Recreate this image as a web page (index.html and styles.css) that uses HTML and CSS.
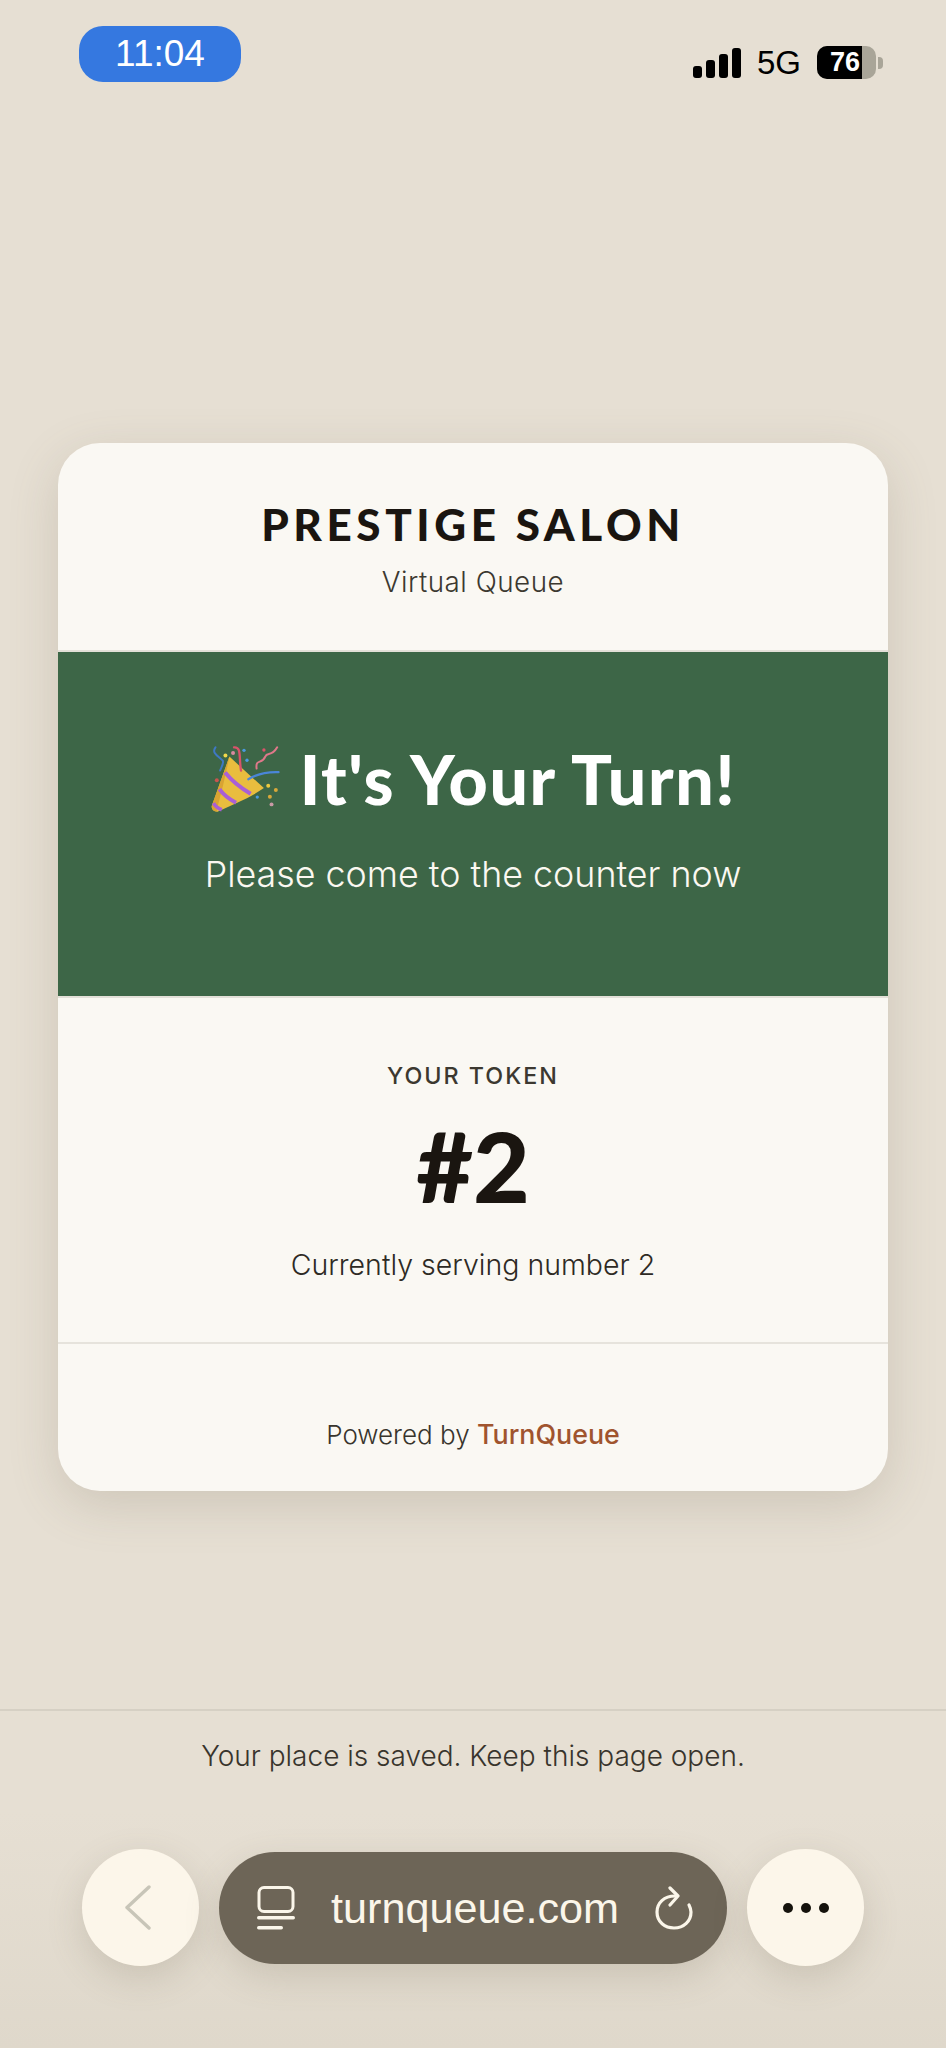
FILE: index.html
```html
<!DOCTYPE html>
<html lang="en">
<head>
<meta charset="utf-8">
<title>Prestige Salon</title>
<link rel="stylesheet" href="styles.css">
</head>
<body>
<div class="screen">
  <header class="status">
    <div class="time">11:04</div>
    <div class="indicators">
      <div class="signal"><i class="b1"></i><i class="b2"></i><i class="b3"></i><i class="b4"></i></div>
      <span class="net">5G</span>
      <div class="battery"><div class="fill"></div><span class="pct">76</span></div>
      <div class="nub"></div>
    </div>
  </header>

  <main class="card">
    <section class="head">
      <h1>PRESTIGE SALON</h1>
      <p>Virtual Queue</p>
    </section>
    <section class="turn">
      <h2>
        <svg class="popper" viewBox="90 75 210 205" aria-hidden="true">
          <path d="M148 110 L252 205 Q215 230 170 250 L112 276 Q92 274 95 258 Z" fill="#e9bd3e"/>
          <path d="M148 110 Q132 190 110 270 L112 276 Q92 274 95 258 Z" fill="#d9a332"/>
          <path d="M135 158 Q165 195 212 222" fill="none" stroke="#a95fd6" stroke-width="12"/>
          <path d="M118 208 Q135 232 168 249" fill="none" stroke="#a95fd6" stroke-width="12"/>
          <path d="M100 250 Q108 264 125 270" fill="none" stroke="#a95fd6" stroke-width="11"/>
          <path d="M205 178 Q245 155 296 157" fill="none" stroke="#4a86d8" stroke-width="7" stroke-linecap="round"/>
          <path d="M162 82 C185 80 176 110 183 152" fill="none" stroke="#d9536a" stroke-width="7" stroke-linecap="round"/>
          <path d="M230 146 C226 115 246 135 256 110 C262 95 275 112 292 82" fill="none" stroke="#e0788a" stroke-width="6" stroke-linecap="round"/>
          <path d="M106 82 C92 100 118 110 128 122 C132 132 122 145 120 152" fill="none" stroke="#3f78c4" stroke-width="6" stroke-linecap="round"/>
          <circle cx="136" cy="107" r="6" fill="#f3d84a"/>
          <circle cx="159" cy="99" r="6" fill="#d98aa0"/>
          <circle cx="192" cy="91" r="5" fill="#4a9ae0"/>
          <circle cx="201" cy="121" r="5" fill="#4a9ae0"/>
          <circle cx="252" cy="90" r="5" fill="#d9536a"/>
          <circle cx="110" cy="181" r="6" fill="#c9544e"/>
          <circle cx="265" cy="198" r="6" fill="#ecc93f"/>
          <circle cx="288" cy="211" r="6" fill="#d9a83a"/>
          <circle cx="270" cy="231" r="6" fill="#d9a83a"/>
          <circle cx="232" cy="232" r="5" fill="#4a9ae0"/>
          <circle cx="275" cy="254" r="6" fill="#c99aa6"/>
        </svg>
        <span>It's Your Turn!</span>
      </h2>
      <p>Please come to the counter now</p>
    </section>
    <section class="token">
      <div class="label">YOUR TOKEN</div>
      <div class="number">#2</div>
      <div class="serving">Currently serving number 2</div>
    </section>
    <footer class="powered">Powered by <b>TurnQueue</b></footer>
  </main>

  <div class="spacer"></div>

  <footer class="bottom">
    <p class="saved">Your place is saved. Keep this page open.</p>
    <nav class="browser">
      <button class="round" type="button" aria-label="Back">
        <svg class="chev" viewBox="0 0 28 45"><path d="M25 2 L3 22.5 L25 43" fill="none" stroke="#c8c5b8" stroke-width="3.4" stroke-linecap="round" stroke-linejoin="round"/></svg>
      </button>
      <div class="url">
        <svg class="tabs" viewBox="0 0 38 44"><rect x="2" y="1.5" width="34" height="24" rx="5" fill="none" stroke="#fbf6ea" stroke-width="3"/><rect x="0" y="30" width="38" height="3.4" rx="1.7" fill="#fbf6ea"/><rect x="0" y="40" width="26" height="3.4" rx="1.7" fill="#fbf6ea"/></svg>
        <span class="addr">turnqueue.com</span>
        <svg class="reload" viewBox="0 0 38 44"><path d="M20 10 C9 10 2 17 2 26 C2 36 10 42 19 42 C29 42 36 35 36 26 C36 23 35 21 34 19" fill="none" stroke="#fbf6ea" stroke-width="3.2" stroke-linecap="round"/><path d="M15 2 L23 10 L15 19" fill="none" stroke="#fbf6ea" stroke-width="3.2" stroke-linecap="round" stroke-linejoin="round"/></svg>
      </div>
      <button class="round" type="button" aria-label="More">
        <span class="dots"><i></i><i></i><i></i></span>
      </button>
    </nav>
  </footer>
</div>
</body>
</html>
```
FILE: styles.css
```css
* { box-sizing: border-box; }
html, body { margin: 0; padding: 0; }
body { background: #e6dfd3; font-family: "Inter", "Noto Sans", sans-serif; overflow: hidden; }
.screen { width: 946px; height: 2048px; display: flex; flex-direction: column; background: #e6dfd3; }

.status { height: 443px; flex: none; display: flex; justify-content: space-between; align-items: flex-start; padding: 26px 63px 0 79px; }
.time { width: 162px; height: 56px; border-radius: 24px; background: #3578e0; color: #fff; font: 37px/56px "Liberation Sans", sans-serif; text-align: center; }
.indicators { display: flex; align-items: flex-end; margin-top: 20px; height: 33px; }
.signal { display: flex; align-items: flex-end; gap: 4.5px; height: 30px; margin-bottom: 1px; }
.signal i { display: block; width: 8.5px; background: #000; border-radius: 3px; }
.b1 { height: 12px; } .b2 { height: 18px; } .b3 { height: 24px; } .b4 { height: 30px; }
.net { font: 33px/35px "Liberation Sans", sans-serif; color: #000; margin-left: 16px; margin-right: 16px; position: relative; top: 1px; }
.battery { position: relative; width: 59px; height: 33px; border-radius: 10px; overflow: hidden; background: #a9a598; }
.fill { width: 45px; height: 100%; background: #000; }
.pct { position: absolute; left: 13px; top: 0; font: bold 27px/33px "Liberation Sans", sans-serif; color: #fff; }
.nub { width: 5px; height: 12px; margin: 0 0 10px 2px; background: #a9a598; border-radius: 0 4px 4px 0; }

.card { flex: none; margin: 0 58px; height: 1048px; background: #faf8f3; border-radius: 42px; box-shadow: 0 14px 50px rgba(110, 100, 80, .2); overflow: hidden; display: flex; flex-direction: column; }
.head { height: 209px; flex: none; text-align: center; padding-top: 51px; border-bottom: 2px solid #e3e0d8; }
.head h1 { margin: 0; font: 900 44px/60px "Lato", sans-serif; letter-spacing: 4.6px; color: #1a1510; }
.head p { margin: 10px 0 0; font-size: 27.8px; line-height: 36px; font-weight: 300; letter-spacing: .5px; color: #3c3830; }

.turn { height: 346px; flex: none; background: #3d6647; color: #fff; text-align: center; padding-top: 92px; border-bottom: 2px solid #e3e0d8; }
.turn h2 { margin: 0; display: flex; justify-content: center; align-items: center; gap: 20px; height: 70px; font: 900 68px/70px "Lato", sans-serif; letter-spacing: 1.6px; }
.popper { width: 70px; height: 68px; display: block; }
.turn p { margin: 38px 0 0; font-size: 35.8px; line-height: 44px; font-weight: 300; color: #fbf8f1; }

.token { height: 346px; flex: none; text-align: center; padding-top: 64px; border-bottom: 2px solid #e6e3dc; }
.label { font-size: 23.3px; line-height: 28px; font-weight: 500; letter-spacing: 2px; color: #3c3830; }
.number { font: 900 98px/100px "Lato", sans-serif; color: #1a1510; margin-top: 25px; }
.serving { font-size: 28.5px; line-height: 38px; font-weight: 300; color: #2e2a24; margin-top: 31px; }

.powered { flex: 1; text-align: center; padding-top: 72px; font-size: 26px; line-height: 36px; font-weight: 300; color: #38342c; }
.powered b { font-size: 26.8px; font-weight: 500; color: #a0542e; }

.spacer { flex: 1; }

.bottom { flex: none; height: 339px; border-top: 2px solid #d6d0c4; background: linear-gradient(#e6dfd3 30%, #dfd8cb 100%); }
.saved { margin: 26px 0 0; text-align: center; font-size: 28px; line-height: 38px; font-weight: 300; color: #38342c; }
.browser { display: flex; align-items: center; gap: 20px; margin-top: 74px; padding-left: 82px; }
.round { width: 117px; height: 117px; border: 0; padding: 0; border-radius: 50%; background: #fcf6ea; box-shadow: 0 12px 36px rgba(110, 100, 80, .2); display: flex; align-items: center; justify-content: center; }
.chev { width: 28px; height: 45px; display: block; margin-right: 6px; }
.dots { display: flex; gap: 8px; }
.dots i { display: block; width: 10px; height: 10px; border-radius: 50%; background: #15120c; }
.url { width: 508px; height: 112px; border-radius: 56px; background: #6d6557; box-shadow: 0 12px 36px rgba(110, 100, 80, .2); color: #fbf6ea; display: flex; align-items: center; padding-left: 38px; }
.tabs { width: 38px; height: 44px; display: block; flex: none; }
.addr { font: 43.2px/50px "Liberation Sans", sans-serif; margin-left: 36px; width: 324px; }
.reload { width: 38px; height: 44px; display: block; flex: none; }
```
